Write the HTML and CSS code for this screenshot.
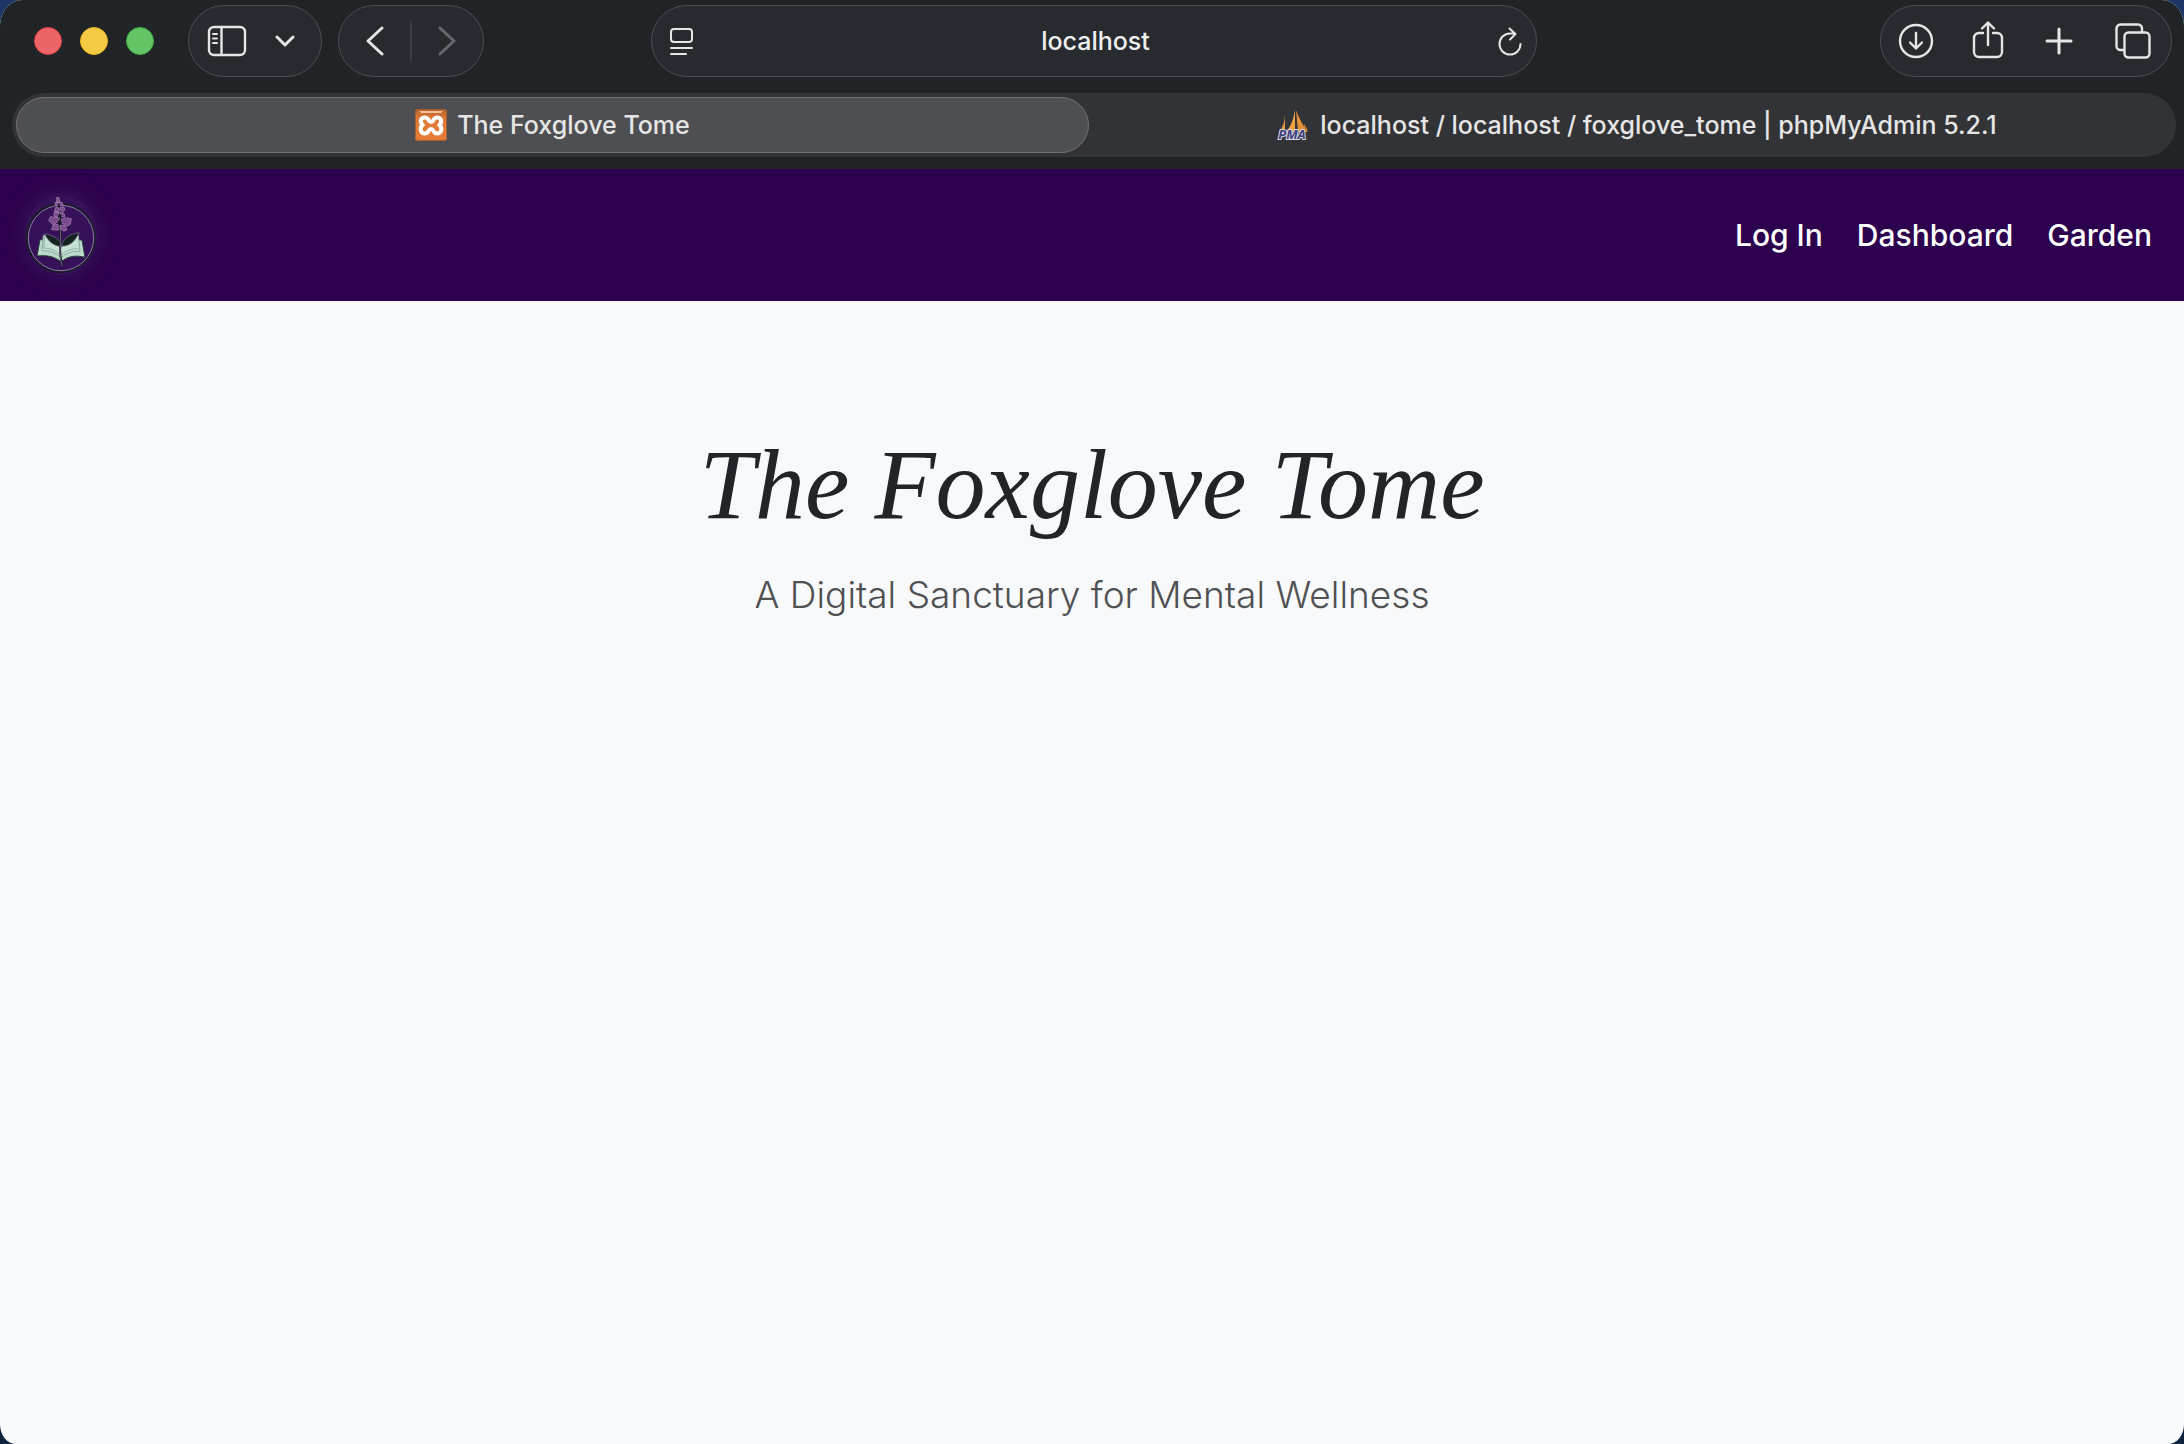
FILE: index.html
```html
<!DOCTYPE html>
<html lang="en">
<head>
<meta charset="utf-8">
<meta name="viewport" content="width=device-width, initial-scale=1">
<title>The Foxglove Tome</title>
<link rel="stylesheet" href="styles.css">
</head>
<body>
<div class="window">
  <header class="chrome">
    <div class="toolbar">
      <div class="toolbar-left">
        <div class="lights">
          <button class="light light-close" aria-label="Close"></button>
          <button class="light light-min" aria-label="Minimize"></button>
          <button class="light light-max" aria-label="Zoom"></button>
        </div>
        <div class="pill pill-sidebar">
          <button class="icon-btn" aria-label="Show sidebar">
            <svg width="40" height="32" viewBox="0 0 40 32"><rect x="2" y="2" width="36" height="28" rx="5"/><path d="M14.500 2v28"/><path class="thin" d="M6 9h4M6 13.500h4M6 18h4"/></svg>
          </button>
          <button class="icon-btn" aria-label="Tab groups">
            <svg width="20" height="12" viewBox="0 0 20 12"><path class="bold" d="M2 2l8 8 8-8"/></svg>
          </button>
        </div>
        <div class="pill pill-history">
          <button class="icon-btn" aria-label="Back">
            <svg width="20" height="30" viewBox="0 0 20 30"><path class="bold" d="M16 2L2 15l14 13"/></svg>
          </button>
          <span class="divider"></span>
          <button class="icon-btn icon-dim" aria-label="Forward" disabled>
            <svg width="20" height="30" viewBox="0 0 20 30"><path class="bold" d="M4 2l14 13L4 28"/></svg>
          </button>
        </div>
      </div>
      <div class="pill address">
        <button class="icon-btn" aria-label="Page menu">
          <svg width="24" height="30" viewBox="0 0 24 30"><rect x="2" y="3" width="21" height="13" rx="3"/><path d="M2 22h21M2 28h15"/></svg>
        </button>
        <input class="url" type="text" value="localhost" aria-label="Address">
        <button class="icon-btn" aria-label="Reload">
          <svg width="24" height="30" viewBox="0 0 24 30"><path d="M22.500 18a10.500 10.500 0 1 1-10.500-10.500H16M11.500 2.500l6 5.500-5.500 5.500"/></svg>
        </button>
      </div>
      <div class="toolbar-right">
        <div class="pill pill-actions">
          <button class="icon-btn" aria-label="Downloads">
            <svg width="36" height="36" viewBox="0 0 36 36"><circle cx="18" cy="18" r="16"/><path d="M18 10v15M12 19.500l6 6 6-6"/></svg>
          </button>
          <button class="icon-btn" aria-label="Share">
            <svg width="36" height="40" viewBox="0 0 36 40"><path d="M11 12H7a5 5 0 0 0-5 5v14a5 5 0 0 0 5 5h18a5 5 0 0 0 5-5V17a5 5 0 0 0-5-5h-4M16 24V2M10 7.500L16 1.500l6 6"/></svg>
          </button>
          <button class="icon-btn" aria-label="New tab">
            <svg width="32" height="28" viewBox="0 0 32 28"><path class="bold" d="M14 2v24M2 14h24"/></svg>
          </button>
          <button class="icon-btn" aria-label="Tab overview">
            <svg width="36" height="36" viewBox="0 0 36 36"><rect x="9.500" y="9.500" width="25" height="25" rx="4"/><path d="M9 27H5.500a4 4 0 0 1-4-4V5.500a4 4 0 0 1 4-4H23a4 4 0 0 1 4 4V9"/></svg>
          </button>
        </div>
      </div>
    </div>
    <nav class="tabs" aria-label="Tabs">
      <button class="tab tab-active">
        <svg width="32" height="32" viewBox="0 0 32 32">
          <defs><linearGradient id="orange" x1="0" y1="0" x2="0" y2="1"><stop offset="0" stop-color="#b55f28"/><stop offset=".3" stop-color="#e07a38"/><stop offset="1" stop-color="#e87c35"/></linearGradient></defs>
          <rect width="32" height="32" rx="3" fill="url(#orange)"/>
          <rect x=".5" y=".5" width="31" height="31" rx="3" fill="none" stroke="#a85e2d"/>
          <path d="M4 2h24l-2 2H6z" fill="#f3c29d"/>
          <path d="M10 8.500c-4 0-5.500 4-2.500 7.500-3.500 3.500-1.500 8.500 2.500 8.500s3-4.500 6-4.500 2 4.500 6 4.500 6-5 2.500-8.500c3-3.500 1.500-7.500-2.500-7.500s-3 4.500-6 4.500-2-4.500-6-4.500z" fill="none" stroke="#fff" stroke-width="4"/>
        </svg>
        <span>The Foxglove Tome</span>
      </button>
      <button class="tab">
        <svg width="34" height="32" viewBox="0 0 34 32">
          <path d="M9 5c0 7-2 13-6 18h6z" fill="#e0953f"/><path d="M19 0c-1 9-4 17-9 23h9z" fill="#f0a245"/><path d="M20 1l2 22h10C27 17 23 9 20 1z" fill="#e28e36"/><path d="M28 15l4 6h-4z" fill="#ca7a30"/>
          <text class="pma" x="16" y="30" text-anchor="middle">PMA</text>
        </svg>
        <span>localhost / localhost / foxglove_tome | phpMyAdmin 5.2.1</span>
      </button>
    </nav>
  </header>

  <nav class="site-nav" aria-label="Main">
    <a class="logo" href="#" aria-label="The Foxglove Tome">
      <svg width="72" height="80" viewBox="75 87 216 240">
        <circle cx="182" cy="216" r="102" fill="none" stroke="#1c1c2c" stroke-width="7"/>
        <circle cx="183" cy="216" r="98" fill="none" stroke="#8d7aa8" stroke-width="3"/>
        <path d="M120 221l-9 49c27-3 50 0 72 17 22-17 45-20 72-13l-9-52c-20-2-45 4-63 22-18-18-40-24-63-23z" fill="#bcdccb" stroke="#253b37" stroke-width="3"/>
        <path d="M130 208l-4 46c25 0 43 7 57 22 15-15 33-21 57-20l-5-48c-20 4-38 14-52 33-15-20-32-31-53-33z" fill="#c5e3d2" stroke="#8ba69f" stroke-width="3"/>
        <path d="M134 212l-3 34c22 2 38 8 52 22 14-14 30-20 52-20" fill="none" stroke="#93aba5" stroke-width="3"/>
        <path d="M133 203c30 5 49 17 52 39-24-2-40-15-52-39zM238 200c-32 4-50 18-53 41 28-1 40-17 53-41z" fill="#15221f" stroke="#7c7590" stroke-width="2"/>
        <path d="M173 96c5 35 5 75 9 110 1 35-8 55 6 94" fill="none" stroke="#171a22" stroke-width="6"/>
        <path d="M174 110c5 35 5 70 8 100 1 35-8 50 5 90" fill="none" stroke="#978ca4" stroke-width="2"/>
        <path d="M170 94l7 1 2 13-9 2zM165 110l10-3 12 3 2 8-10 2-13-2zM167 124l9-2 2 11-6 7-9-4zM181 124l11-1 3 9-7 5-7-5zM164 137l12 1-1 14-9 1-5-7zM181 138l10 3 4 10-10 2-5-7zM151 152l23 3 4 9-18 13-14-13zM184 160l12-5 18 3-3 17-10 6-16-10zM159 178l15-3 1 17-20-1zM182 178l13 1 6 13-10 3-9-6z" fill="#7b4b8d" stroke="#b08bb6" stroke-width="2"/>
        <path d="M176 112l5 8-4 6-5-6zM176 143l9 4-2 9-9-4zM178 160l8 9-8 9-5-9z" fill="#171a22"/>
      </svg>
    </a>
    <ul class="links">
      <li><a href="#">Log In</a></li>
      <li><a href="#">Dashboard</a></li>
      <li><a href="#">Garden</a></li>
    </ul>
  </nav>

  <main class="hero">
    <h1 class="title">The Foxglove Tome</h1>
    <p class="subtitle">A Digital Sanctuary for Mental Wellness</p>
  </main>
</div>
</body>
</html>
```
FILE: styles.css
```css
* { box-sizing: border-box; }

body {
  margin: 0;
  background: linear-gradient(#1d3768, #10233f);
  font-family: Inter, "Liberation Sans", sans-serif;
}

button {
  margin: 0;
  padding: 0;
  border: 0;
  background: none;
  color: inherit;
  font: inherit;
}

.window {
  display: flex;
  flex-direction: column;
  min-height: 100vh;
  overflow: hidden;
  border-radius: 22px 22px 16px 16px / 26px 26px 20px 20px;
  background: #f8f9fb;
}

/* Browser chrome */
.chrome {
  padding: 5px 8px 12px 12px;
  background: #202426;
  color: #e6e6e6;
}

.toolbar {
  display: grid;
  grid-template-columns: 1fr minmax(0, 886px) 1fr;
  align-items: center;
  padding: 0 4px;
}

.toolbar-left {
  display: flex;
  align-items: center;
  gap: 16px;
}

.toolbar-right {
  display: flex;
  justify-content: flex-end;
}

.lights {
  display: flex;
  gap: 18px;
  padding: 0 18px;
}

.light {
  width: 28px;
  height: 28px;
  border-radius: 50%;
}

.light-close { background: #ee6567; border: 1px solid #e74244; }
.light-min { background: #f4c944; border: 1px solid #edb91f; }
.light-max { background: #65c466; border: 1px solid #3fae43; }

.pill {
  display: flex;
  align-items: center;
  justify-content: space-between;
  height: 72px;
  border: 1px solid #46505a;
  border-radius: 36px;
  background: #272a2f;
}

.pill-sidebar { width: 134px; padding: 0 26px 0 18px; }
.pill-history { width: 146px; padding: 0 27px; }
.pill-actions { width: 292px; padding: 0 20px 0 17px; }
.address { padding: 0 14px 0 17px; }

.icon-btn { display: flex; }
.icon-dim { color: #66696d; }

.icon-btn svg {
  fill: none;
  stroke: currentColor;
  stroke-width: 2.4;
  stroke-linecap: round;
  stroke-linejoin: round;
}

.icon-btn .thin { stroke-width: 2; }
.icon-btn .bold { stroke-width: 3; }
.address svg { stroke-width: 2; }

.divider {
  width: 2px;
  height: 40px;
  background: #3a3d42;
}

.url {
  flex: 1;
  min-width: 0;
  border: 0;
  background: none;
  color: #f0f0f0;
  font: 500 25px/36px Inter, "Liberation Sans", sans-serif;
  text-align: center;
}

.tabs {
  display: flex;
  gap: 12px;
  margin-top: 16px;
  padding: 4px;
  border-radius: 32px;
  background: #323336;
}

.tab {
  display: flex;
  flex: 1;
  align-items: center;
  justify-content: center;
  gap: 10px;
  min-width: 0;
  height: 56px;
  border-radius: 28px;
  font-size: 25px;
  font-weight: 500;
  line-height: 32px;
  white-space: nowrap;
}

.tab svg { overflow: visible; }

.tab-active {
  border: 1px solid #717276;
  background: #4e4f52;
}

.pma {
  fill: #3d3f7c;
  stroke: #d5d5e2;
  stroke-width: 2px;
  paint-order: stroke;
  font: italic 700 13px "Open Sans", sans-serif;
}

/* Site */
.site-nav {
  display: flex;
  align-items: center;
  justify-content: space-between;
  min-height: 132px;
  padding: 0 32px 0 25px;
  background: #2c014d;
}

.logo {
  display: flex;
  border-radius: 50%;
  background: #36115a;
  box-shadow: 0 0 20px 4px #36115a;
}

.links {
  display: flex;
  gap: 34px;
  margin: 0;
  padding: 0;
  list-style: none;
}

.links a {
  color: #fff;
  font-size: 30px;
  font-weight: 500;
  line-height: 48px;
  text-decoration: none;
}

.hero {
  flex: 1;
  padding: 124px 24px;
  text-align: center;
}

.title {
  margin: 0;
  color: #212529;
  font: italic 400 100px/120px "Liberation Serif", serif;
}

.subtitle {
  margin: 26px 0 0;
  color: #505153;
  font-size: 37px;
  font-weight: 300;
  line-height: 48px;
}
```
